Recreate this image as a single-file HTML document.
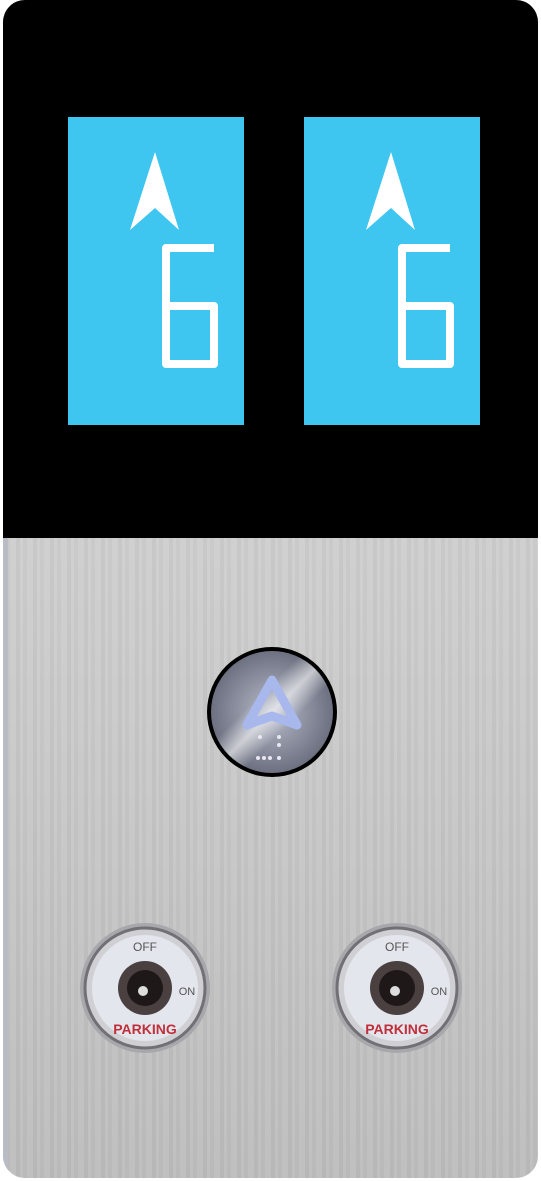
<!DOCTYPE html>
<html><head><style>
html,body{margin:0;padding:0;background:#fff;width:541px;height:1181px;overflow:hidden}
.panel{position:absolute;left:3px;top:0;width:535px;height:1178px;border-radius:22px;overflow:hidden;
background:linear-gradient(180deg,#d6d6d6 0%,#cdcdcd 50%,#bdbdbd 100%)}
.black{position:absolute;left:0;top:0;width:535px;height:538px;background:#000}
.brush{position:absolute;left:0;top:538px;width:535px;height:640px;
background:repeating-linear-gradient(90deg,rgba(255,255,255,.05) 0 3px,rgba(0,0,0,.02) 3px 7px,rgba(255,255,255,.04) 7px 13px,rgba(0,0,0,.03) 13px 17px)}
.edge{position:absolute;left:0;top:538px;width:5px;height:640px;background:#b9bcc4}
</style></head><body>
<div class="panel"><div class="black"></div><div class="brush"></div><div class="edge"></div></div>
<svg width="541" height="1181" style="position:absolute;left:0;top:0" xmlns="http://www.w3.org/2000/svg">
<defs>
<g id="disp">
<rect x="68" y="117" width="176" height="308" fill="#3ec6f0"/>
<path d="M155 152 L179 230 L155 208 L130 230 Z" fill="#fff"/>
<path d="M214 248 H166 V364 H214 V306 H166" fill="none" stroke="#fff" stroke-width="8" stroke-linejoin="round"/>
</g>
<radialGradient id="btn" cx="50%" cy="50%" r="50%">
<stop offset="0" stop-color="#b8bccb"/><stop offset="1" stop-color="#6c7080"/></radialGradient>
<linearGradient id="shine" x1="0" y1="0" x2="1" y2="1">
<stop offset="0.38" stop-color="#fff" stop-opacity="0"/><stop offset="0.5" stop-color="#fff" stop-opacity=".6"/><stop offset="0.62" stop-color="#fff" stop-opacity="0"/></linearGradient>
<g id="key">
<circle r="65" fill="#a8a8ac"/>
<circle r="60" fill="#d0d0d4" stroke="#707076" stroke-width="3"/>
<circle r="53" fill="#e4e6ee"/>
<circle r="27" fill="#4a4040"/>
<circle r="18" fill="#1e1818"/>
<circle cx="-2" cy="3" r="5" fill="#ddd"/>
<text x="0" y="-37" font-family="Liberation Sans,sans-serif" font-size="12" fill="#555" text-anchor="middle">OFF</text>
<text x="42" y="7" font-family="Liberation Sans,sans-serif" font-size="11" fill="#555" text-anchor="middle">ON</text>
<text x="0" y="46" font-family="Liberation Sans,sans-serif" font-size="14" font-weight="bold" fill="#c0303a" text-anchor="middle">PARKING</text>
</g>
</defs>
<use href="#disp"/>
<use href="#disp" x="236"/>
<circle cx="272" cy="712" r="65" fill="#000"/>
<circle cx="272" cy="712" r="61" fill="url(#btn)"/>
<circle cx="272" cy="712" r="61" fill="url(#shine)"/>
<path d="M272 680 L297 725 L272 716 L247 725 Z" fill="none" stroke="#a8b8ec" stroke-width="9" stroke-linejoin="round"/>
<g fill="#e8e8f0"><circle cx="260" cy="737" r="2"/><circle cx="279" cy="737" r="2"/><circle cx="279" cy="745" r="2"/><circle cx="258" cy="758" r="2"/><circle cx="264" cy="758" r="2"/><circle cx="270" cy="758" r="2"/><circle cx="279" cy="758" r="2"/></g>
<use href="#key" x="145" y="988"/>
<use href="#key" x="397" y="988"/>
</svg>
</body></html>
